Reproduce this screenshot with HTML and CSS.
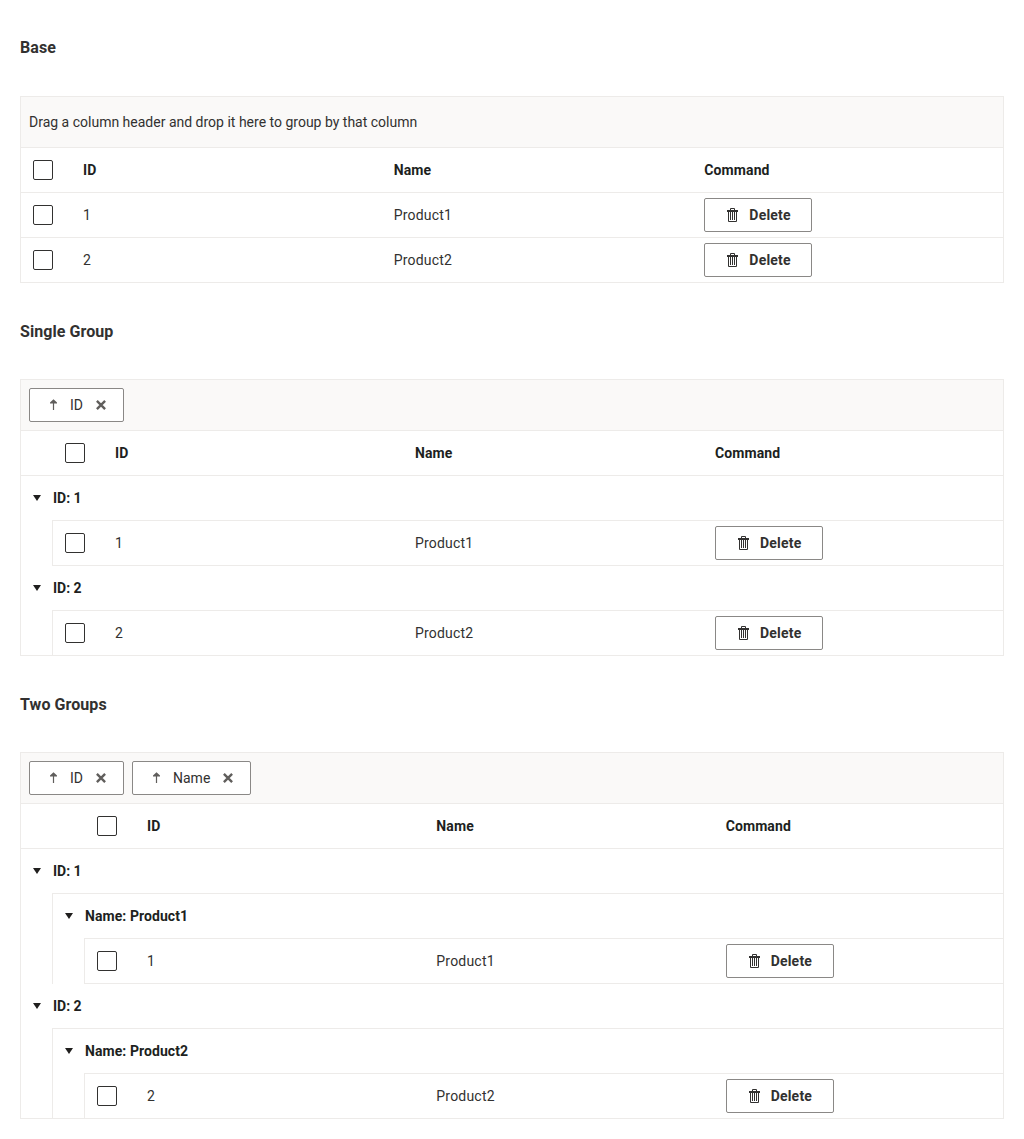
FILE: index.html
```html
<!DOCTYPE html>
<html lang="en">
<head>
<meta charset="utf-8">
<title>Grid grouping</title>
<link rel="stylesheet" href="styles.css">
</head>
<body>
<svg class="sprite" aria-hidden="true">
  <symbol id="trash" viewBox="0 0 16 16">
    <path fill="currentColor" fill-rule="evenodd" d="M5 3V2q0-1 1-1h3q1 0 1 1v1h3v2h-1v9q0 1-1 1H4q-1 0-1-1V5H2V3zM6 3h3V2H6zM4 5v9h7V5zM5 5h1v8H5zM7 5h1v8H7zM9 5h1v8H9z"/>
  </symbol>
  <symbol id="up" viewBox="0 0 16 16">
    <path fill="currentColor" d="M7.500 2.200 11 5.500v1H8.100v6.500H6.900V6.500H4v-1z"/>
  </symbol>
  <symbol id="close" viewBox="0 0 16 16">
    <path fill="none" stroke="currentColor" stroke-width="2.400" d="M3.900 3.900 12.100 12.100M12.100 3.900 3.900 12.100"/>
  </symbol>
  <symbol id="caret" viewBox="0 0 16 16">
    <path fill="currentColor" d="M4 5h8l-4 6z"/>
  </symbol>
</svg>

<h4 class="title title-first">Base</h4>
<section class="grid">
  <div class="drop-area">Drag a column header and drop it here to group by that column</div>
  <div class="row header"><span class="cell"><i class="checkbox"></i></span><span class="cell">ID</span><span class="cell">Name</span><span class="cell">Command</span></div>
  <div class="row"><span class="cell"><i class="checkbox"></i></span><span class="cell">1</span><span class="cell">Product1</span><span class="cell"><button class="button"><svg class="icon"><use href="#trash"/></svg>Delete</button></span></div>
  <div class="row"><span class="cell"><i class="checkbox"></i></span><span class="cell">2</span><span class="cell">Product2</span><span class="cell"><button class="button"><svg class="icon"><use href="#trash"/></svg>Delete</button></span></div>
</section>

<h4 class="title">Single Group</h4>
<section class="grid">
  <div class="drop-area"><span class="chip"><svg class="icon"><use href="#up"/></svg>ID<svg class="icon"><use href="#close"/></svg></span></div>
  <div class="row header indent-1"><span class="cell"><i class="checkbox"></i></span><span class="cell">ID</span><span class="cell">Name</span><span class="cell">Command</span></div>
  <div class="group">
    <div class="group-row"><svg class="icon"><use href="#caret"/></svg>ID: 1</div>
    <div class="group-body">
      <div class="row"><span class="cell"><i class="checkbox"></i></span><span class="cell">1</span><span class="cell">Product1</span><span class="cell"><button class="button"><svg class="icon"><use href="#trash"/></svg>Delete</button></span></div>
    </div>
  </div>
  <div class="group">
    <div class="group-row"><svg class="icon"><use href="#caret"/></svg>ID: 2</div>
    <div class="group-body">
      <div class="row"><span class="cell"><i class="checkbox"></i></span><span class="cell">2</span><span class="cell">Product2</span><span class="cell"><button class="button"><svg class="icon"><use href="#trash"/></svg>Delete</button></span></div>
    </div>
  </div>
</section>

<h4 class="title">Two Groups</h4>
<section class="grid">
  <div class="drop-area"><span class="chip"><svg class="icon"><use href="#up"/></svg>ID<svg class="icon"><use href="#close"/></svg></span><span class="chip"><svg class="icon"><use href="#up"/></svg>Name<svg class="icon"><use href="#close"/></svg></span></div>
  <div class="row header indent-2"><span class="cell"><i class="checkbox"></i></span><span class="cell">ID</span><span class="cell">Name</span><span class="cell">Command</span></div>
  <div class="group">
    <div class="group-row"><svg class="icon"><use href="#caret"/></svg>ID: 1</div>
    <div class="group-body">
      <div class="group-row group-row-nested"><svg class="icon"><use href="#caret"/></svg>Name: Product1</div>
      <div class="group-body">
        <div class="row"><span class="cell"><i class="checkbox"></i></span><span class="cell">1</span><span class="cell">Product1</span><span class="cell"><button class="button"><svg class="icon"><use href="#trash"/></svg>Delete</button></span></div>
      </div>
    </div>
  </div>
  <div class="group">
    <div class="group-row"><svg class="icon"><use href="#caret"/></svg>ID: 2</div>
    <div class="group-body">
      <div class="group-row group-row-nested"><svg class="icon"><use href="#caret"/></svg>Name: Product2</div>
      <div class="group-body">
        <div class="row"><span class="cell"><i class="checkbox"></i></span><span class="cell">2</span><span class="cell">Product2</span><span class="cell"><button class="button"><svg class="icon"><use href="#trash"/></svg>Delete</button></span></div>
      </div>
    </div>
  </div>
</section>
</body>
</html>
```
FILE: styles.css
```css
* {
  box-sizing: border-box;
}

body {
  margin: 0;
  padding: 36px 20px 20px;
  background: #fff;
  color: #323130;
  font: 14px/20px Roboto, sans-serif;
}

.sprite {
  display: none;
}

.title {
  margin: 37px 0 35px;
  font-size: 16px;
  font-weight: 700;
  line-height: 24px;
  letter-spacing: 0.07px;
}

.title-first {
  margin: 0 0 36px;
}

.grid {
  border: 1px solid #edebe9;
}

.drop-area {
  display: flex;
  align-items: center;
  gap: 8px;
  height: 51px;
  padding: 0 8px;
  border-bottom: 1px solid #edebe9;
  background: #faf9f8;
}

.chip,
.button {
  display: flex;
  align-items: center;
  gap: 8px;
  height: 34px;
  border: 1px solid #8a8886;
  border-radius: 2px;
  background: #fff;
  color: #323130;
}

.chip {
  padding: 0 14px 0 16px;
}

.chip .icon {
  color: #605e5c;
}

.chip .icon:last-child {
  margin-left: 2px;
}

.button {
  width: 108px;
  padding: 0 20px;
  font: 700 14px/20px Roboto, sans-serif;
  letter-spacing: 0.2px;
}

.icon {
  flex: none;
  width: 16px;
  height: 16px;
}

.row {
  display: grid;
  grid-template-columns: 50px repeat(3, 1fr);
  height: 45px;
  border-bottom: 1px solid #edebe9;
  letter-spacing: 0.2px;
}

.row:last-child {
  height: 44px;
  border-bottom: 0;
}

.cell {
  display: flex;
  align-items: center;
  padding: 0 12px;
}

.header {
  color: #201f1e;
  font-weight: 700;
  letter-spacing: 0.1px;
}

.indent-1 {
  padding-left: 32px;
}

.indent-2 {
  padding-left: 64px;
}

.checkbox {
  flex: none;
  width: 20px;
  height: 20px;
  border: 1px solid #323130;
  border-radius: 2px;
}

.group-row {
  display: flex;
  align-items: center;
  gap: 8px;
  height: 44px;
  padding: 0 8px;
  color: #201f1e;
  font-weight: 700;
}

.group-row-nested {
  letter-spacing: 0.07px;
}

.group-body {
  margin-left: 31px;
  border-top: 1px solid #edebe9;
  border-left: 1px solid #edebe9;
}

.group:not(:last-child) .group-body:last-child:not(:has(.group-body)) {
  border-bottom: 1px solid #edebe9;
}
```
